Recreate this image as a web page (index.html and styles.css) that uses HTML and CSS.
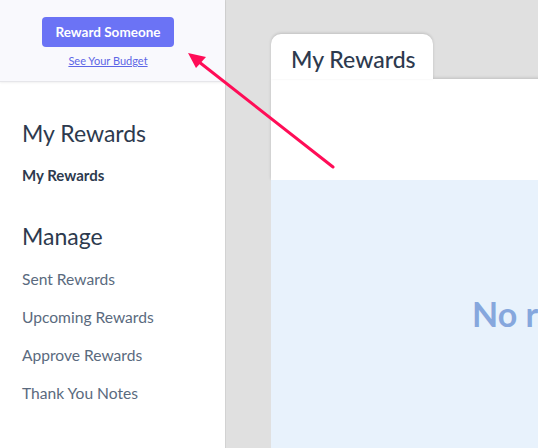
FILE: index.html
```html
<!DOCTYPE html>
<html lang="en">
<head>
    <meta charset="UTF-8">
    <meta name="viewport" content="width=device-width, initial-scale=1.0">
    <title>My Rewards</title>
    <link rel="stylesheet" href="styles.css">
</head>
<body>
    <aside class="sidebar">
        <div class="sidebar-top">
            <button class="btn-reward">Reward Someone</button>
            <a class="budget-link" href="#">See Your Budget</a>
        </div>
        <nav class="sidebar-nav">
            <h2 class="nav-title">My Rewards</h2>
            <a class="nav-link active" href="#">My Rewards</a>
            <h2 class="nav-title manage">Manage</h2>
            <a class="nav-link" href="#">Sent Rewards</a>
            <a class="nav-link" href="#">Upcoming Rewards</a>
            <a class="nav-link" href="#">Approve Rewards</a>
            <a class="nav-link" href="#">Thank You Notes</a>
        </nav>
    </aside>

    <main class="main">
        <div class="card">
            <div class="tabs">
                <div class="tab">My Rewards</div>
            </div>
            <div class="card-body"></div>
            <div class="empty">
                <p class="empty-text">No rewards yet</p>
            </div>
        </div>
    </main>

    <!-- annotation arrow pointing to the button -->
    <svg class="arrow" width="538" height="448" viewBox="0 0 538 448">
        <line x1="333" y1="167" x2="194" y2="58" stroke="#ff0d57" stroke-width="3" stroke-linecap="round"/>
        <polygon points="188,53 206,57 196,68" fill="#ff0d57"/>
    </svg>
</body>
</html>
```

FILE: styles.css
```css
body {
    font-family: Lato, "Open Sans", sans-serif;
    margin: 0;
    padding: 0;
    display: flex;
    height: 448px;
    overflow: hidden;
    background-color: #e0e0e0;
}
.sidebar {
    width: 225px;
    flex-shrink: 0;
    background-color: white;
    border-right: 1px solid #d2d2d2;
}
.sidebar-top {
    height: 82px;
    box-sizing: border-box;
    padding: 17px 9px 0 0;
    background-color: #f9f9fd;
    border-bottom: 1px solid #e6e6ea;
    box-shadow: 0 1px 2px rgba(0,0,0,0.06);
    display: flex;
    flex-direction: column;
    align-items: center;
}
.btn-reward {
    width: 132px;
    height: 30px;
    background-color: #6b73f5;
    color: white;
    border: none;
    border-radius: 4px;
    font-family: inherit;
    font-weight: 700;
    font-size: 13.5px;
    padding: 0;
}
.budget-link {
    margin-top: 7px;
    font-size: 11px;
    color: #5d66e6;
    text-decoration: underline;
}
.sidebar-nav {
    padding: 37px 22px 0;
    display: flex;
    flex-direction: column;
    align-items: flex-start;
}
.nav-title {
    margin: 0;
    font-weight: 400;
    font-size: 23px;
    line-height: 28px;
    color: #2d3a4e;
}
.nav-title.manage {
    margin-top: 28px;
    margin-bottom: 10px;
}
.nav-link {
    font-size: 15.6px;
    line-height: 38px;
    color: #5a6a7e;
    text-decoration: none;
}
.nav-link.active {
    margin-top: 9px;
    font-weight: 700;
    font-size: 15px;
    color: #2d3a4e;
}
.main {
    flex: 1;
    padding: 34px 0 0 45px;
    overflow: hidden;
}
.card {
    width: 600px;
}
.tabs {
    display: flex;
}
.tab {
    width: 162px;
    height: 45px;
    box-sizing: border-box;
    padding: 11px 0 0 20px;
    background-color: white;
    border-radius: 10px 10px 0 0;
    box-shadow: 0 -1px 3px rgba(0,0,0,0.15);
    font-size: 23px;
    font-weight: 500;
    color: #2d3a4e;
    position: relative;
    z-index: 1;
}
.card-body {
    height: 101px;
    background-color: white;
    box-shadow: 0 -1px 3px rgba(0,0,0,0.15);
}
.empty {
    height: 300px;
    background-color: #e8f2fc;
    padding: 113px 0 0 201px;
    box-sizing: border-box;
}
.empty-text {
    margin: 0;
    font-size: 34px;
    font-weight: 700;
    color: #86a7dd;
    white-space: nowrap;
}
.arrow {
    position: absolute;
    top: 0;
    left: 0;
    pointer-events: none;
}
```
